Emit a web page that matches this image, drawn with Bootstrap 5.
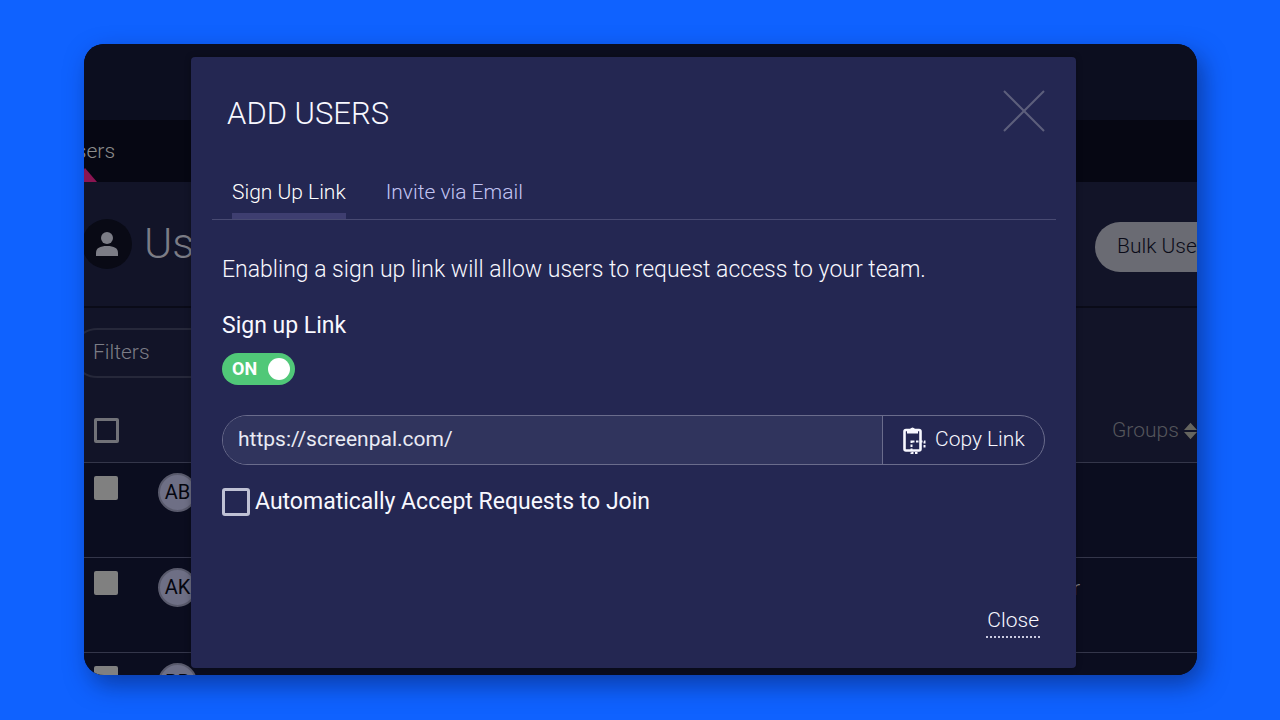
<!DOCTYPE html>
<html lang="en">
<head>
<meta charset="utf-8">
<meta name="viewport" content="width=device-width, initial-scale=1">
<title>Add Users</title>
<link href="https://cdn.jsdelivr.net/npm/bootstrap@5.3.0/dist/css/bootstrap.min.css" rel="stylesheet">
<style>
  body { font-family: Roboto, "Liberation Sans", sans-serif; font-weight: 300; background: #0f62ff; padding: 44px 83px 45px 84px; color: #f8f8ff; }
  .app-window { border-radius: 20px; background: #0b0d1f; box-shadow: 6px 10px 24px rgba(8, 24, 80, .5); }
  .team-page { inset: 0; border-radius: inherit; font-size: 21px; color: #85868f; }
  .brand-bar { height: 76px; background: #0c0e1f; }
  .menu-bar { height: 62px; background: #060713; }
  .menu-link { margin-left: -22px; line-height: 62px; color: #8c8c8c; text-decoration: none; }
  .menu-link::after { content: ""; position: absolute; bottom: 0; left: 11px; border: 12px solid transparent; border-top: 0; border-bottom: 14px solid #8b1552; }
  .panel-area { background: #121428; }
  .page-heading { height: 126px; border-bottom: 2px solid #0a0b18; }
  .page-heading h2 { font-size: 43px; font-weight: 300; color: #7c7d86; margin-left: 12px; }
  .user-disc { width: 50px; height: 50px; margin-left: -2px; background: #090a15; }
  .bulk-btn { width: 136px; height: 50px; margin: 5px -34px 0 0; border: 0; background: #6a6b73; color: #0a0b18; font-size: 21px; padding: 0 0 0 22px; }
  .filter-row { height: 91px; padding-top: 20px; }
  .filter-box { width: 260px; height: 50px; margin-left: -12px; padding-left: 19px; font-size: 21px; color: #7c7d86; background: transparent; border: 2px solid #26283a; }
  .user-table { width: 100%; table-layout: fixed; border-collapse: collapse; }
  .user-table tr { border-bottom: 1px solid #34364a; height: 95px; background: #0b0d1f; }
  .user-table thead tr { height: 63px; background: #121428; }
  .user-table td { vertical-align: top; padding-top: 10px; }
  .user-table th { font-weight: 300; color: #55565c; }
  .user-table .role-cell { padding: 15px 31px 0 0; text-align: right; }
  .col-tick { width: 73px; } .col-group { width: 86px; } .col-role { width: 129px; }
  .pick { appearance: none; display: block; width: 24px; height: 24px; margin: 3px 0 0 9px; border-radius: 2px; background: #808080; }
  .pick-all { width: 25px; height: 25px; margin-top: 0; border: 3px solid #717278; background: transparent; }
  .avatar { width: 39px; height: 39px; border: 2px solid #595a6c; background: #6e6f85; color: #05060f; font-size: 20px; font-weight: 400; }
  .overlay-pad { padding: 13px 0 7px; }
  .dialog-box { margin: 0 121px 0 107px; border-radius: 4px; background: #242752; min-height: 611px; padding: 33px 31px 30px; box-shadow: 0 0 6px rgba(0, 0, 0, .3); }
  .dialog-box h1 { font-size: 31px; line-height: 48px; font-weight: 300; padding-left: 5px; }
  .x-btn { width: 42px; height: 42px; color: #5d5f7c; }
  .tab-strip { margin: 28px -11px 0 -10px; padding: 0 20px; gap: 40px; border-bottom: 1px solid #484a72; }
  .tab-link { font-size: 21px; line-height: 44px; height: 53px; padding-top: 4px; color: #c2c4f2; border-bottom: 6px solid transparent; text-decoration: none; }
  .tab-link.current { color: #fff; border-color: #3e3e70; }
  .intro { font-size: 23px; line-height: 32px; margin: 34px 0 24px; }
  .section-title { font-size: 23px; line-height: 32px; font-weight: 400; }
  .on-switch { width: 73px; height: 32px; margin-top: 11px; padding: 0 5px 0 10px; background: #50c878; border-radius: 16px; font-size: 18px; line-height: 30px; font-weight: 700; color: #fff; }
  .on-switch input { appearance: none; width: 22px; height: 22px; border-radius: 50%; background: #fff; }
  .link-group { height: 50px; margin-top: 30px; border: 1px solid #6a6c8c; border-radius: 25px; overflow: hidden; }
  .link-group input { border: 0; background: #30345d; color: #e9eaf4; font-size: 21px; font-weight: 400; padding: 0 15px; min-width: 0; outline: 0; }
  .copy-btn { width: 162px; border: 0; border-left: 1px solid #6a6c8c; background: transparent; color: #f8f8ff; font-size: 21px; padding: 0 0 0 18px; }
  .auto-check { margin-top: 19px; font-size: 23px; line-height: 36px; font-weight: 400; }
  .auto-check input { appearance: none; width: 28px; height: 28px; border: 3px solid #bfc1d4; border-radius: 3px; margin-right: 5px; }
  .close-btn { border: 0; border-bottom: 2px dotted #c9cae0; background: transparent; color: #f8f8ff; font-size: 21px; line-height: 32px; padding: 0 1px; margin-right: 5px; }
  button { font-weight: 300; }
</style>
</head>
<body>
<div class="app-window position-relative">
  <div class="team-page position-absolute overflow-hidden">
    <div class="brand-bar"></div>
    <nav class="menu-bar"><a href="#" class="menu-link d-inline-block position-relative h-100">Users</a></nav>
    <div class="panel-area">
      <div class="page-heading d-flex align-items-center">
        <span class="user-disc rounded-circle d-flex align-items-center justify-content-center flex-shrink-0">
          <svg width="22" height="24" viewBox="0 0 22 24" fill="#7c7d86"><circle cx="11" cy="6" r="6"/><path d="M0 24v-3c0-5 4-7 11-7s11 2 11 7v3z"/></svg>
        </span>
        <h2 class="mb-0">Users</h2>
        <button type="button" class="bulk-btn rounded-pill text-start text-nowrap ms-auto">Bulk User</button>
      </div>
      <div class="filter-row"><button type="button" class="filter-box rounded-pill text-start">Filters</button></div>
    </div>
    <table class="user-table">
      <colgroup><col class="col-tick"><col><col class="col-role"><col class="col-group"></colgroup>
      <thead><tr><th><input class="pick pick-all" type="checkbox" aria-label="Select all"></th><th></th><th></th>
        <th class="text-nowrap">Groups <svg width="13" height="18" viewBox="0 0 14 18" fill="#65655f"><path d="M7 0l7 8H0zM7 18l7-8H0z"/></svg></th></tr></thead>
      <tbody>
        <tr><td><input class="pick" type="checkbox" aria-label="Select AB"></td><td><span class="avatar rounded-circle d-flex align-items-center justify-content-center">AB</span></td><td></td><td></td></tr>
        <tr><td><input class="pick" type="checkbox" aria-label="Select AK"></td><td><span class="avatar rounded-circle d-flex align-items-center justify-content-center">AK</span></td><td class="role-cell">User</td><td></td></tr>
        <tr><td><input class="pick" type="checkbox" aria-label="Select BB"></td><td><span class="avatar rounded-circle d-flex align-items-center justify-content-center">BB</span></td><td></td><td></td></tr>
      </tbody>
    </table>
  </div>

  <div class="overlay-pad position-relative">
    <section class="dialog-box d-flex flex-column" role="dialog" aria-labelledby="dlg-title">
      <header class="d-flex justify-content-between">
        <h1 id="dlg-title" class="mb-0">ADD USERS</h1>
        <button type="button" class="x-btn btn p-0 border-0 lh-1" aria-label="Close dialog"><svg class="d-block" width="42" height="42" viewBox="0 0 42 42" fill="none" stroke="currentColor" stroke-width="2"><path d="M1 1l40 40M41 1L1 41"/></svg></button>
      </header>
      <nav class="tab-strip d-flex">
        <a href="#" class="tab-link current">Sign Up Link</a>
        <a href="#" class="tab-link">Invite via Email</a>
      </nav>
      <p class="intro">Enabling a sign up link will allow users to request access to your team.</p>
      <h2 class="section-title mb-0">Sign up Link</h2>
      <label class="on-switch d-flex align-items-center justify-content-between">ON <input type="checkbox" role="switch" checked></label>
      <div class="link-group d-flex">
        <input type="text" class="flex-grow-1" value="https://screenpal.com/" aria-label="Sign up link" readonly>
        <button type="button" class="copy-btn d-flex align-items-center flex-shrink-0">
          <svg class="me-2" width="26" height="28" viewBox="0 0 26 28" fill="none" stroke="currentColor"><path stroke-width="2.6" d="M10 24.500H5Q3.500 24.500 3.500 23V5.500Q3.500 4 5 4H18Q19.500 4 19.500 5.500V23Q19.500 24.500 18 24.500H10"/><path fill="currentColor" stroke="none" d="M6 7.500V3h3q2.500-3 5 0h3v4.500z"/><path stroke-width="2" stroke-dasharray="2.500 1.500" d="M10.500 14.500V27h7M11 15.500h12.500v6"/></svg>
          Copy Link</button>
      </div>
      <label class="auto-check d-flex align-items-center align-self-start"><input type="checkbox"> Automatically Accept Requests to Join</label>
      <footer class="mt-auto text-end"><button type="button" class="close-btn">Close</button></footer>
    </section>
  </div>
</div>
<script src="https://cdn.jsdelivr.net/npm/bootstrap@5.3.0/dist/js/bootstrap.bundle.min.js"></script>
</body>
</html>
